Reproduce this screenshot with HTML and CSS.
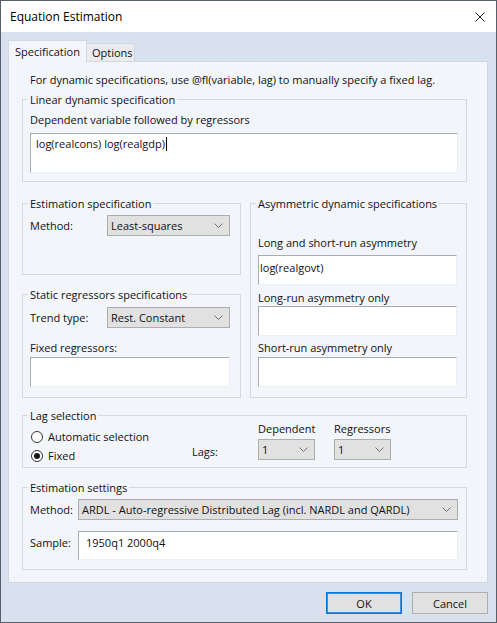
FILE: index.html
```html
<!DOCTYPE html>
<html lang="en">
<head>
<meta charset="utf-8">
<title>Equation Estimation</title>
<link rel="stylesheet" href="styles.css">
</head>
<body>
<div class="window">
  <div class="titlebar">
    <span class="title">Equation Estimation</span>
    <svg class="close" width="10" height="10" viewBox="0 0 10 10"><path d="M0.5 0.5 L9.5 9.5 M9.5 0.5 L0.5 9.5" stroke="#1e1e1e" stroke-width="1" fill="none"/></svg>
  </div>
  <div class="client">
    <div class="tabs">
      <div class="tab active">Specification</div>
      <div class="tab inactive">Options</div>
    </div>
    <div class="panel">
      <p class="intro">For dynamic specifications, use @fl(variable, lag) to manually specify a fixed lag.</p>

      <fieldset class="group g-linear">
        <legend>Linear dynamic specification</legend>
        <div class="lbl-line">Dependent variable followed by regressors</div>
        <div class="edit edit-linear">log(realcons) log(realgdp)<span class="caret"></span></div>
      </fieldset>

      <div class="columns">
        <div class="col-left">
          <fieldset class="group g-est">
            <legend>Estimation specification</legend>
            <div class="row">
              <span class="lbl lbl-77">Method:</span>
              <div class="combo w-123"><span>Least-squares</span><svg class="chev" width="9" height="5" viewBox="0 0 9 5"><path d="M0.5 0.5 L4.5 4.5 L8.5 0.5" fill="none" stroke="#707070"/></svg></div>
            </div>
          </fieldset>
          <fieldset class="group g-static">
            <legend>Static regressors specifications</legend>
            <div class="row">
              <span class="lbl lbl-77">Trend type:</span>
              <div class="combo w-123"><span>Rest. Constant</span><svg class="chev" width="9" height="5" viewBox="0 0 9 5"><path d="M0.5 0.5 L4.5 4.5 L8.5 0.5" fill="none" stroke="#707070"/></svg></div>
            </div>
            <div class="lbl-line fixed-label">Fixed regressors:</div>
            <div class="edit edit-small"></div>
          </fieldset>
        </div>
        <fieldset class="group g-asym">
          <legend>Asymmetric dynamic specifications</legend>
          <div class="lbl-line asym-l1">Long and short-run asymmetry</div>
          <div class="edit edit-small asym-e1">log(realgovt)</div>
          <div class="lbl-line asym-l2">Long-run asymmetry only</div>
          <div class="edit edit-small asym-e2"></div>
          <div class="lbl-line asym-l3">Short-run asymmetry only</div>
          <div class="edit edit-small asym-e3"></div>
        </fieldset>
      </div>

      <fieldset class="group g-lag">
        <legend>Lag selection</legend>
        <div class="lag-row">
          <div class="radios">
            <div class="radio-row"><span class="radio"></span>Automatic selection</div>
            <div class="radio-row"><span class="radio on"></span>Fixed</div>
          </div>
          <div class="lags-label">Lags:</div>
          <div class="lagcol">
            <div class="lbl-line">Dependent</div>
            <div class="combo w-57"><span>1</span><svg class="chev" width="9" height="5" viewBox="0 0 9 5"><path d="M0.5 0.5 L4.5 4.5 L8.5 0.5" fill="none" stroke="#707070"/></svg></div>
          </div>
          <div class="lagcol">
            <div class="lbl-line">Regressors</div>
            <div class="combo w-57"><span>1</span><svg class="chev" width="9" height="5" viewBox="0 0 9 5"><path d="M0.5 0.5 L4.5 4.5 L8.5 0.5" fill="none" stroke="#707070"/></svg></div>
          </div>
        </div>
      </fieldset>

      <fieldset class="group g-settings">
        <legend>Estimation settings</legend>
        <div class="row">
          <span class="lbl lbl-48">Method:</span>
          <div class="combo grow"><span>ARDL - Auto-regressive Distributed Lag (incl. NARDL and QARDL)</span><svg class="chev" width="9" height="5" viewBox="0 0 9 5"><path d="M0.5 0.5 L4.5 4.5 L8.5 0.5" fill="none" stroke="#707070"/></svg></div>
        </div>
        <div class="sample-row">
          <span class="lbl lbl-48 sample-lbl">Sample:</span>
          <div class="edit edit-sample">1950q1 2000q4</div>
        </div>
      </fieldset>
    </div>
    <div class="buttons">
      <button class="btn default">OK</button>
      <button class="btn">Cancel</button>
    </div>
  </div>
</div>
</body>
</html>
```
FILE: styles.css
```css
html, body {
  margin: 0;
  padding: 0;
}
body {
  font-family: "Open Sans", "Noto Sans", sans-serif;
  font-size: 11px;
  line-height: 15px;
  color: #111;
  background: #fff;
}
.window {
  width: 497px;
  height: 623px;
  box-sizing: border-box;
  border: 1px solid #56606b;
  background: #d8e2ee;
  display: flex;
  flex-direction: column;
}
.titlebar {
  flex: none;
  height: 31px;
  background: #fff;
  display: flex;
  align-items: center;
  justify-content: space-between;
  padding: 0 11px 0 9px;
}
.title {
  font-size: 12px;
  color: #000;
}
.close {
  display: block;
}
.client {
  flex: 1;
  display: flex;
  flex-direction: column;
  padding: 8px 8px 0 7px;
}
.tabs {
  display: flex;
  align-items: flex-end;
  height: 21px;
}
.tab {
  box-sizing: border-box;
  border: 1px solid #d4d8dd;
  border-bottom: none;
  white-space: nowrap;
}
.tab.active {
  width: 79px;
  height: 22px;
  margin-bottom: -1px;
  background: #f2f5f9;
  position: relative;
  z-index: 1;
  padding: 3px 0 0 6px;
}
.tab.inactive {
  width: 48px;
  height: 18px;
  border-left: none;
  background: #e9ebee;
  padding: 1px 0 0 5px;
}
.panel {
  box-sizing: border-box;
  height: 522px;
  border: 1px solid #d4d8dd;
  background: #f2f5f9;
  padding: 10px 20px 0 13px;
}
.intro {
  margin: 0 0 0 8px;
  white-space: nowrap;
}
.group {
  margin: 0;
  min-width: 0;
  border: 1px solid #d5d9de;
}
.group legend {
  padding: 0 2px;
  margin-left: -2px;
  line-height: 15px;
}
.lbl-line {
  white-space: nowrap;
}
.edit {
  box-sizing: border-box;
  background: #fff;
  border: 1px solid;
  border-color: #a9abaf #eceef1 #eceef1 #a9abaf;
  white-space: nowrap;
  color: #111;
}
.g-linear {
  margin-top: 5px;
  padding: 5px 8px 8px 7px;
}
.edit-linear {
  height: 40px;
  margin-top: 6px;
  padding: 2px 5px;
}
.caret {
  display: inline-block;
  width: 1px;
  height: 14px;
  background: #000;
  vertical-align: -3px;
  margin-left: 1px;
}
.columns {
  display: flex;
  gap: 9px;
  margin-top: 14px;
}
.col-left {
  flex: none;
  width: 219px;
  display: flex;
  flex-direction: column;
}
.g-est {
  padding: 4px 10px 38px 7px;
}
.g-static {
  margin-top: 12px;
  padding: 5px 10px 10px 7px;
}
.row {
  display: flex;
  align-items: center;
}
.lbl {
  flex: none;
  white-space: nowrap;
}
.lbl-77 { width: 77px; }
.lbl-48 { width: 48px; }
.combo {
  box-sizing: border-box;
  height: 21px;
  background: #e1e1e1;
  border: 1px solid #adadad;
  display: flex;
  align-items: center;
  justify-content: space-between;
  padding: 0 6px 0 3px;
  white-space: nowrap;
  color: #111;
}
.chev {
  flex: none;
  display: block;
}
.w-123 { width: 123px; }
.w-57 { width: 57px; }
.grow { flex: 1; }
.fixed-label {
  margin-top: 12px;
}
.edit-small {
  height: 30px;
  margin-top: 2px;
  padding: 3px 2px;
}
.g-asym {
  flex: 1;
  padding: 0 9px 10px 7px;
}
.asym-l1 { margin-top: 24px; }
.asym-e1 { margin-top: 5px; padding: 4px 1px; }
.asym-l2 { margin-top: 5px; }
.asym-e2 { margin-top: 1px; }
.asym-l3 { margin-top: 4px; }
.asym-e3 { margin-top: 2px; }
.g-lag {
  margin-top: 10px;
  padding: 0 8px 2px 7px;
}
.lag-row {
  display: flex;
  align-items: flex-start;
}
.radios {
  width: 162px;
  flex: none;
  margin-top: 4px;
}
.radio-row {
  height: 19px;
  display: flex;
  align-items: center;
  padding-left: 1px;
  white-space: nowrap;
}
.radio {
  box-sizing: border-box;
  width: 12px;
  height: 12px;
  border: 1px solid #333;
  border-radius: 50%;
  background: #fff;
  margin-right: 5px;
  display: flex;
  align-items: center;
  justify-content: center;
}
.radio.on::after {
  content: "";
  width: 6px;
  height: 6px;
  border-radius: 50%;
  background: #1a1a1a;
}
.lags-label {
  width: 66px;
  flex: none;
  margin-top: 21px;
}
.lagcol {
  width: 76px;
  flex: none;
  margin-top: -2px;
}
.lagcol .combo {
  margin-top: 3px;
}
.g-settings {
  margin-top: 12px;
  padding: 4px 8px 9px 7px;
}
.sample-row {
  display: flex;
  align-items: flex-start;
  margin-top: 11px;
}
.sample-lbl {
  margin-top: 4px;
}
.edit-sample {
  flex: 1;
  height: 29px;
  padding: 3px 7px;
}
.buttons {
  display: flex;
  justify-content: flex-end;
  gap: 10px;
  margin-top: 9px;
}
.btn {
  box-sizing: border-box;
  width: 76px;
  height: 22px;
  padding: 0;
  font: inherit;
  color: #111;
  background: #e1e1e1;
  border: 1px solid #adadad;
  border-radius: 0;
}
.btn.default {
  border: 1px solid #0078d7;
  box-shadow: inset 0 0 0 1px #3a8fdc;
}
```
